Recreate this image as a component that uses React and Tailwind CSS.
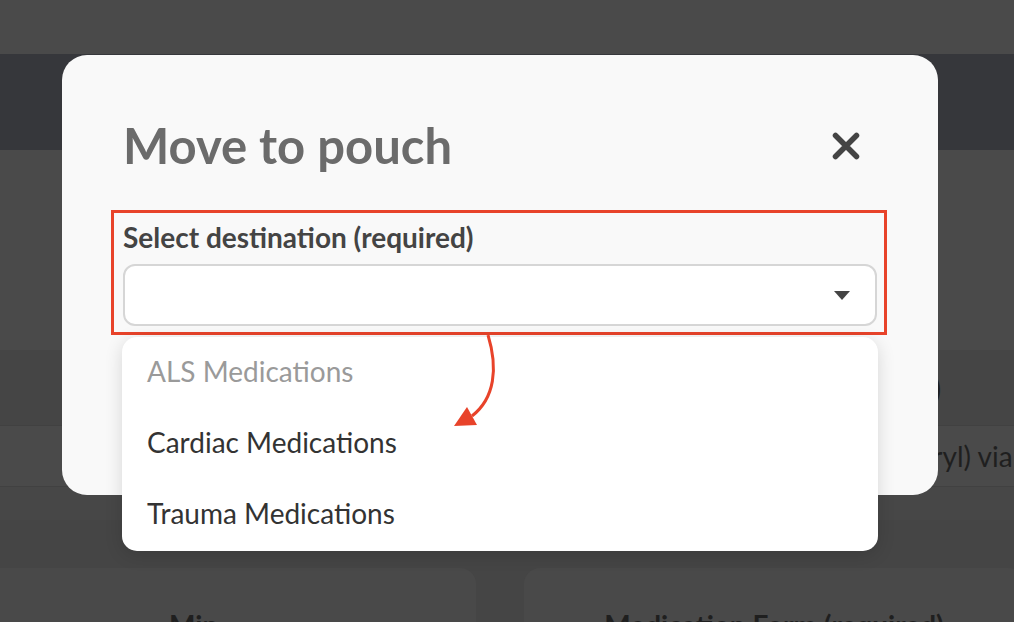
import { useState } from 'react';

const options = [
  { label: 'ALS Medications', disabled: true },
  { label: 'Cardiac Medications' },
  { label: 'Trauma Medications' },
];

export default function App() {
  const [open] = useState(true);

  return (
    <div className="relative flex flex-col w-[1014px] h-[622px] overflow-hidden bg-[#4a4a4a] font-['Lato',sans-serif]">
      {/* Page behind the overlay */}
      <div className="h-[54px] shrink-0 bg-[#4a4a4a]" />
      <div className="h-[96px] shrink-0 bg-[#36373b]" />
      <div className="h-[200px] shrink-0 bg-[#4a4a4a]" />
      <div className="h-[75px] shrink-0 bg-[#454545] flex">
        <div className="w-[476px]" />
        <div className="w-[500px] ml-[48px] flex items-center justify-center text-[28px] font-bold text-[#1f1f1f] whitespace-nowrap">
          Medication Name (required)
        </div>
      </div>
      <div className="h-[62px] shrink-0 bg-[#4a4a4a] border-y border-[#414141] flex items-center overflow-hidden">
        <span className="ml-[847px] text-[28px] text-[#1f1f1f] whitespace-nowrap">(Benadryl) vial</span>
      </div>
      <div className="h-[33px] shrink-0 bg-[#474747]" />
      <div className="h-[48px] shrink-0 bg-[#454545]" />
      <div className="flex-1 min-h-0 flex bg-[#454545] overflow-hidden">
        <div className="w-[500px] ml-[-24px] shrink-0 h-[100px] rounded-t-2xl bg-[#494949] pt-[36px] pl-[193px] text-[28px] font-bold text-[#1f1f1f]">
          Min
        </div>
        <div className="w-[500px] ml-[48px] shrink-0 h-[100px] rounded-t-2xl bg-[#494949] pt-[36px] text-center text-[28px] font-bold text-[#1f1f1f] whitespace-nowrap">
          Medication Form (required)
        </div>
      </div>

      {/* Modal */}
      <div className="absolute left-[62px] top-[55px] w-[876px] h-[440px] rounded-[25px] bg-[#f9f9f9] pl-[49px] pr-[51px] pt-[66px]">
        <div className="flex items-center justify-between pl-[12px] pr-[27px]">
          <h2 className="text-[49px] leading-none font-bold text-[#6b6b6b]">Move to pouch</h2>
          <svg width="28" height="28" viewBox="0 0 28 28" fill="none" stroke="#444" strokeWidth="5.5" strokeLinecap="round">
            <path d="M3.5 3.5L24.5 24.5M24.5 3.5L3.5 24.5" />
          </svg>
        </div>

        <div className="mt-[40px] h-[125px] border-[3px] border-[#e8432a] pt-[10px] pl-[9px] pr-[7px]">
          <div className="text-[28px] leading-none font-bold text-[#444]">Select destination (required)</div>
          <div className="mt-[13px] h-[62px] rounded-[12px] border-2 border-[#d6d6d6] bg-white flex items-center justify-end pr-[25px]">
            <svg width="16" height="9" viewBox="0 0 16 9">
              <path d="M0 0H16L8 9Z" fill="#444" />
            </svg>
          </div>
        </div>
      </div>

      {/* Open dropdown */}
      {open && (
        <div className="absolute left-[122px] top-[337px] w-[756px] h-[214px] rounded-[15px] bg-white shadow-[0_4px_18px_rgba(0,0,0,0.14)] flex flex-col">
          {options.map((o) => (
            <div
              key={o.label}
              className={
                o.disabled
                  ? 'h-[71px] flex items-center px-[25px] pb-[4px] text-[28px] leading-none text-[#9a9a9a]'
                  : 'h-[71px] flex items-center px-[25px] pb-[4px] text-[28px] leading-none text-[#333]'
              }
            >
              {o.label}
            </div>
          ))}
        </div>
      )}

      {/* Annotation arrow */}
      <svg className="absolute inset-0 w-full h-full pointer-events-none" viewBox="0 0 1014 622">
        <path d="M488 335C498 368 495 398 472 416" fill="none" stroke="#e8432a" strokeWidth="3" />
        <polygon points="454,426 477,425 467,407" fill="#e8432a" />
      </svg>
    </div>
  );
}
